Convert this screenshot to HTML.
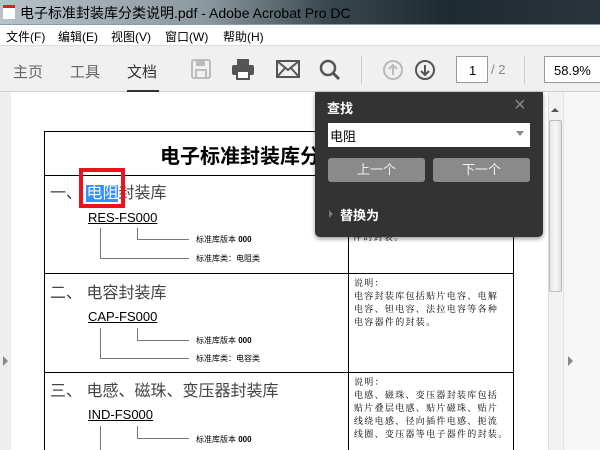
<!DOCTYPE html>
<html><head><meta charset="utf-8"><style>
*{margin:0;padding:0;box-sizing:border-box}
body{width:600px;height:450px;overflow:hidden;position:relative;font-family:"Liberation Sans","Noto Sans CJK SC",sans-serif;background:#fff}
.abs{position:absolute}
.title{left:0;top:0;width:600px;height:24px;background:linear-gradient(90deg,#b8c2c8 0,#8a969e 35%,#3a464e 55%,#1e2a32 75%,#2a343c 100%);}
.title span{position:absolute;left:20px;top:3px;font-size:14px;color:#000;}
.menu{top:24px;left:0;width:600px;height:21px;background:#fff;border-top:1px solid #8a9aa6;font-size:12px;color:#000}
.menu span{position:absolute;top:3px}
.tb{top:45px;left:0;width:600px;height:47px;background:#f0f0f0;border-top:1px solid #ddd;border-bottom:1px solid #d0d0d0}
.tb .t{position:absolute;top:15px;font-size:15px;color:#666}
.doc{top:92px;left:0;width:600px;height:358px;background:#fff}
.sm{font-size:9px;color:#000;font-family:"Noto Serif CJK SC",serif;line-height:13px;letter-spacing:1.3px}
.ln{position:absolute;background:#000}
.g{position:absolute;background:#777}
</style></head><body>
<div class="abs title"><div style="position:absolute;left:3px;top:5px;width:12px;height:14px;background:#fff;border-top:3px solid #d22"></div><span>电子标准封装库分类说明.pdf - Adobe Acrobat Pro DC</span></div>
<div class="abs menu"><span style="left:6px">文件(F)</span><span style="left:58px">编辑(E)</span><span style="left:111px">视图(V)</span><span style="left:165px">窗口(W)</span><span style="left:223px">帮助(H)</span></div>
<div class="abs tb">
<span class="t" style="left:13px">主页</span><span class="t" style="left:70px">工具</span><span class="t" style="left:127px;color:#333">文档</span>
<div style="position:absolute;left:127px;top:44px;width:32px;height:3px;background:#333"></div>
<svg style="position:absolute;left:190px;top:12px" width="22" height="22"><rect x="2" y="2" width="18" height="18" rx="2" fill="none" stroke="#bbb" stroke-width="2"/><rect x="6" y="2" width="9" height="6" fill="#bbb"/><rect x="6" y="12" width="10" height="8" fill="none" stroke="#bbb" stroke-width="2"/></svg>
<svg style="position:absolute;left:231px;top:12px" width="24" height="22"><rect x="6" y="1" width="12" height="6" fill="#555"/><rect x="1" y="7" width="22" height="10" rx="2" fill="#555"/><rect x="6" y="13" width="12" height="8" fill="#fff" stroke="#555" stroke-width="2"/></svg>
<svg style="position:absolute;left:276px;top:14px" width="24" height="18"><rect x="1" y="1" width="22" height="16" fill="none" stroke="#555" stroke-width="2"/><path d="M1 1 L12 10 L23 1 M1 17 L9 8 M23 17 L15 8" fill="none" stroke="#555" stroke-width="2"/></svg>
<svg style="position:absolute;left:318px;top:12px" width="24" height="24"><circle cx="10" cy="10" r="7" fill="none" stroke="#555" stroke-width="2.5"/><path d="M15 15 L21 21" stroke="#555" stroke-width="3"/></svg>
<div style="position:absolute;left:361px;top:10px;width:1px;height:28px;background:#ccc"></div>
<svg style="position:absolute;left:382px;top:13px" width="22" height="22"><circle cx="11" cy="11" r="9" fill="none" stroke="#bbb" stroke-width="2"/><path d="M11 16 V6 M7 10 L11 6 L15 10" fill="none" stroke="#bbb" stroke-width="2"/></svg>
<svg style="position:absolute;left:414px;top:13px" width="22" height="22"><circle cx="11" cy="11" r="9" fill="none" stroke="#555" stroke-width="2"/><path d="M11 6 V16 M7 12 L11 16 L15 12" fill="none" stroke="#555" stroke-width="2"/></svg>
<div style="position:absolute;left:456px;top:10px;width:32px;height:27px;background:#fff;border:1px solid #999;font-size:13px;padding:6px 0 0 12px">1</div>
<span style="position:absolute;left:491px;top:16px;font-size:13px;color:#888">/ 2</span>
<div style="position:absolute;left:524px;top:10px;width:1px;height:28px;background:#ccc"></div>
<div style="position:absolute;left:544px;top:10px;width:60px;height:27px;background:#fff;border:1px solid #999;font-size:13px;padding:6px 0 0 9px">58.9%</div>
</div>
<div class="abs doc">
<div style="position:absolute;left:0;top:0;width:11px;height:358px;background:#eee"></div>
<div style="position:absolute;left:3px;top:264px;border-left:5px solid #888;border-top:5px solid transparent;border-bottom:5px solid transparent"></div>
<div style="position:absolute;left:548px;top:0;width:15px;height:358px;background:#f2f2f2;border-left:1px solid #ddd"></div>
<div style="position:absolute;left:549px;top:28px;width:13px;height:172px;background:linear-gradient(90deg,#e6e6e6,#f8f8f8,#e0e0e0);border:1px solid #bbb;border-radius:2px"></div>
<div style="position:absolute;left:551px;top:16px;border-bottom:4px solid #555;border-left:4px solid transparent;border-right:4px solid transparent"></div>
<div style="position:absolute;left:563px;top:0;width:37px;height:358px;background:#f6f6f6;border-left:1px solid #e4e4e4"></div>
<div style="position:absolute;left:568px;top:264px;border-left:5px solid #888;border-top:5px solid transparent;border-bottom:5px solid transparent"></div>
</div>
<div class="ln" style="left:44px;top:131px;width:470px;height:1px"></div>
<div class="ln" style="left:44px;top:131px;width:1px;height:319px"></div>
<div class="ln" style="left:513px;top:131px;width:1px;height:319px"></div>
<div class="ln" style="left:44px;top:175px;width:470px;height:1px"></div>
<div class="ln" style="left:44px;top:273px;width:470px;height:1px"></div>
<div class="ln" style="left:44px;top:372px;width:470px;height:1px"></div>
<div class="ln" style="left:348px;top:175px;width:1px;height:275px"></div>
<div class="abs" style="left:160px;top:140px;font-size:20px;font-weight:bold;white-space:nowrap">电子标准封装库分类说明</div>
<div class="abs" style="left:50px;top:179px;font-size:16px;color:#444;white-space:nowrap">一、 <span style="background:#3390ff;color:#fff">电阻</span>封装库</div>
<div class="abs" style="left:79px;top:168px;width:46px;height:40px;border:4px solid #e8141c"></div>
<div class="abs" style="left:88px;top:210px;font-size:13px;text-decoration:underline">RES-FS000</div>
<div class="g" style="left:137px;top:228px;width:1px;height:12px"></div><div class="g" style="left:137px;top:239px;width:52px;height:1px"></div>
<div class="g" style="left:100px;top:228px;width:1px;height:31px"></div><div class="g" style="left:100px;top:258px;width:89px;height:1px"></div>
<div class="abs" style="left:196px;top:234px;font-size:8px">标准库版本 <b>000</b></div>
<div class="abs" style="left:196px;top:253px;font-size:8px">标准库类：电阻类</div>
<div class="abs sm" style="left:353px;top:230px">件的封装。</div>

<div class="abs" style="left:50px;top:279px;font-size:16px;color:#444;white-space:nowrap">二、 电容封装库</div>
<div class="abs" style="left:88px;top:309px;font-size:13px;text-decoration:underline">CAP-FS000</div>
<div class="g" style="left:137px;top:328px;width:1px;height:12px"></div><div class="g" style="left:137px;top:340px;width:52px;height:1px"></div>
<div class="g" style="left:100px;top:328px;width:1px;height:30px"></div><div class="g" style="left:100px;top:358px;width:89px;height:1px"></div>
<div class="abs" style="left:196px;top:335px;font-size:8px">标准库版本 <b>000</b></div>
<div class="abs" style="left:196px;top:353px;font-size:8px">标准库类：电容类</div>
<div class="abs sm" style="left:354px;top:276px">说明：<br>电容封装库包括贴片电容、电解<br>电容、钽电容、法拉电容等各种<br>电容器件的封装。</div>

<div class="abs" style="left:50px;top:377px;font-size:16px;color:#444;white-space:nowrap">三、 电感、磁珠、变压器封装库</div>
<div class="abs" style="left:88px;top:407px;font-size:13px;text-decoration:underline">IND-FS000</div>
<div class="g" style="left:137px;top:426px;width:1px;height:12px"></div><div class="g" style="left:137px;top:438px;width:52px;height:1px"></div>
<div class="g" style="left:100px;top:426px;width:1px;height:24px"></div>
<div class="abs" style="left:196px;top:434px;font-size:8px">标准库版本 <b>000</b></div>
<div class="abs sm" style="left:354px;top:375px">说明：<br>电感、磁珠、变压器封装库包括<br>贴片叠层电感、贴片磁珠、贴片<br>线绕电感、径向插件电感、扼流<br>线圈、变压器等电子器件的封装。</div>

<div class="abs" style="left:315px;top:92px;width:228px;height:145px;background:#333;border-radius:0 0 5px 5px;box-shadow:0 2px 4px rgba(0,0,0,.4)">
<div style="position:absolute;left:12px;top:6px;font-size:13px;font-weight:bold;color:#fff">查找</div>
<div style="position:absolute;left:199px;top:2px;font-size:20px;color:#888">×</div>
<div style="position:absolute;left:13px;top:31px;width:202px;height:24px;background:#fff;font-size:13px;padding:3px 2px">电阻<span style="position:absolute;right:6px;top:8px;border-top:5px solid #888;border-left:4px solid transparent;border-right:4px solid transparent"></span></div>
<div style="position:absolute;left:13px;top:66px;width:97px;height:24px;background:#8a8a8a;border-radius:3px;color:#eee;font-size:13px;text-align:center;line-height:24px">上一个</div>
<div style="position:absolute;left:118px;top:66px;width:97px;height:24px;background:#8a8a8a;border-radius:3px;color:#eee;font-size:13px;text-align:center;line-height:24px">下一个</div>
<div style="position:absolute;left:14px;top:118px;border-left:4px solid #777;border-top:4px solid transparent;border-bottom:4px solid transparent"></div>
<div style="position:absolute;left:25px;top:113px;font-size:13px;font-weight:bold;color:#fff">替换为</div>
</div>
</body></html>
